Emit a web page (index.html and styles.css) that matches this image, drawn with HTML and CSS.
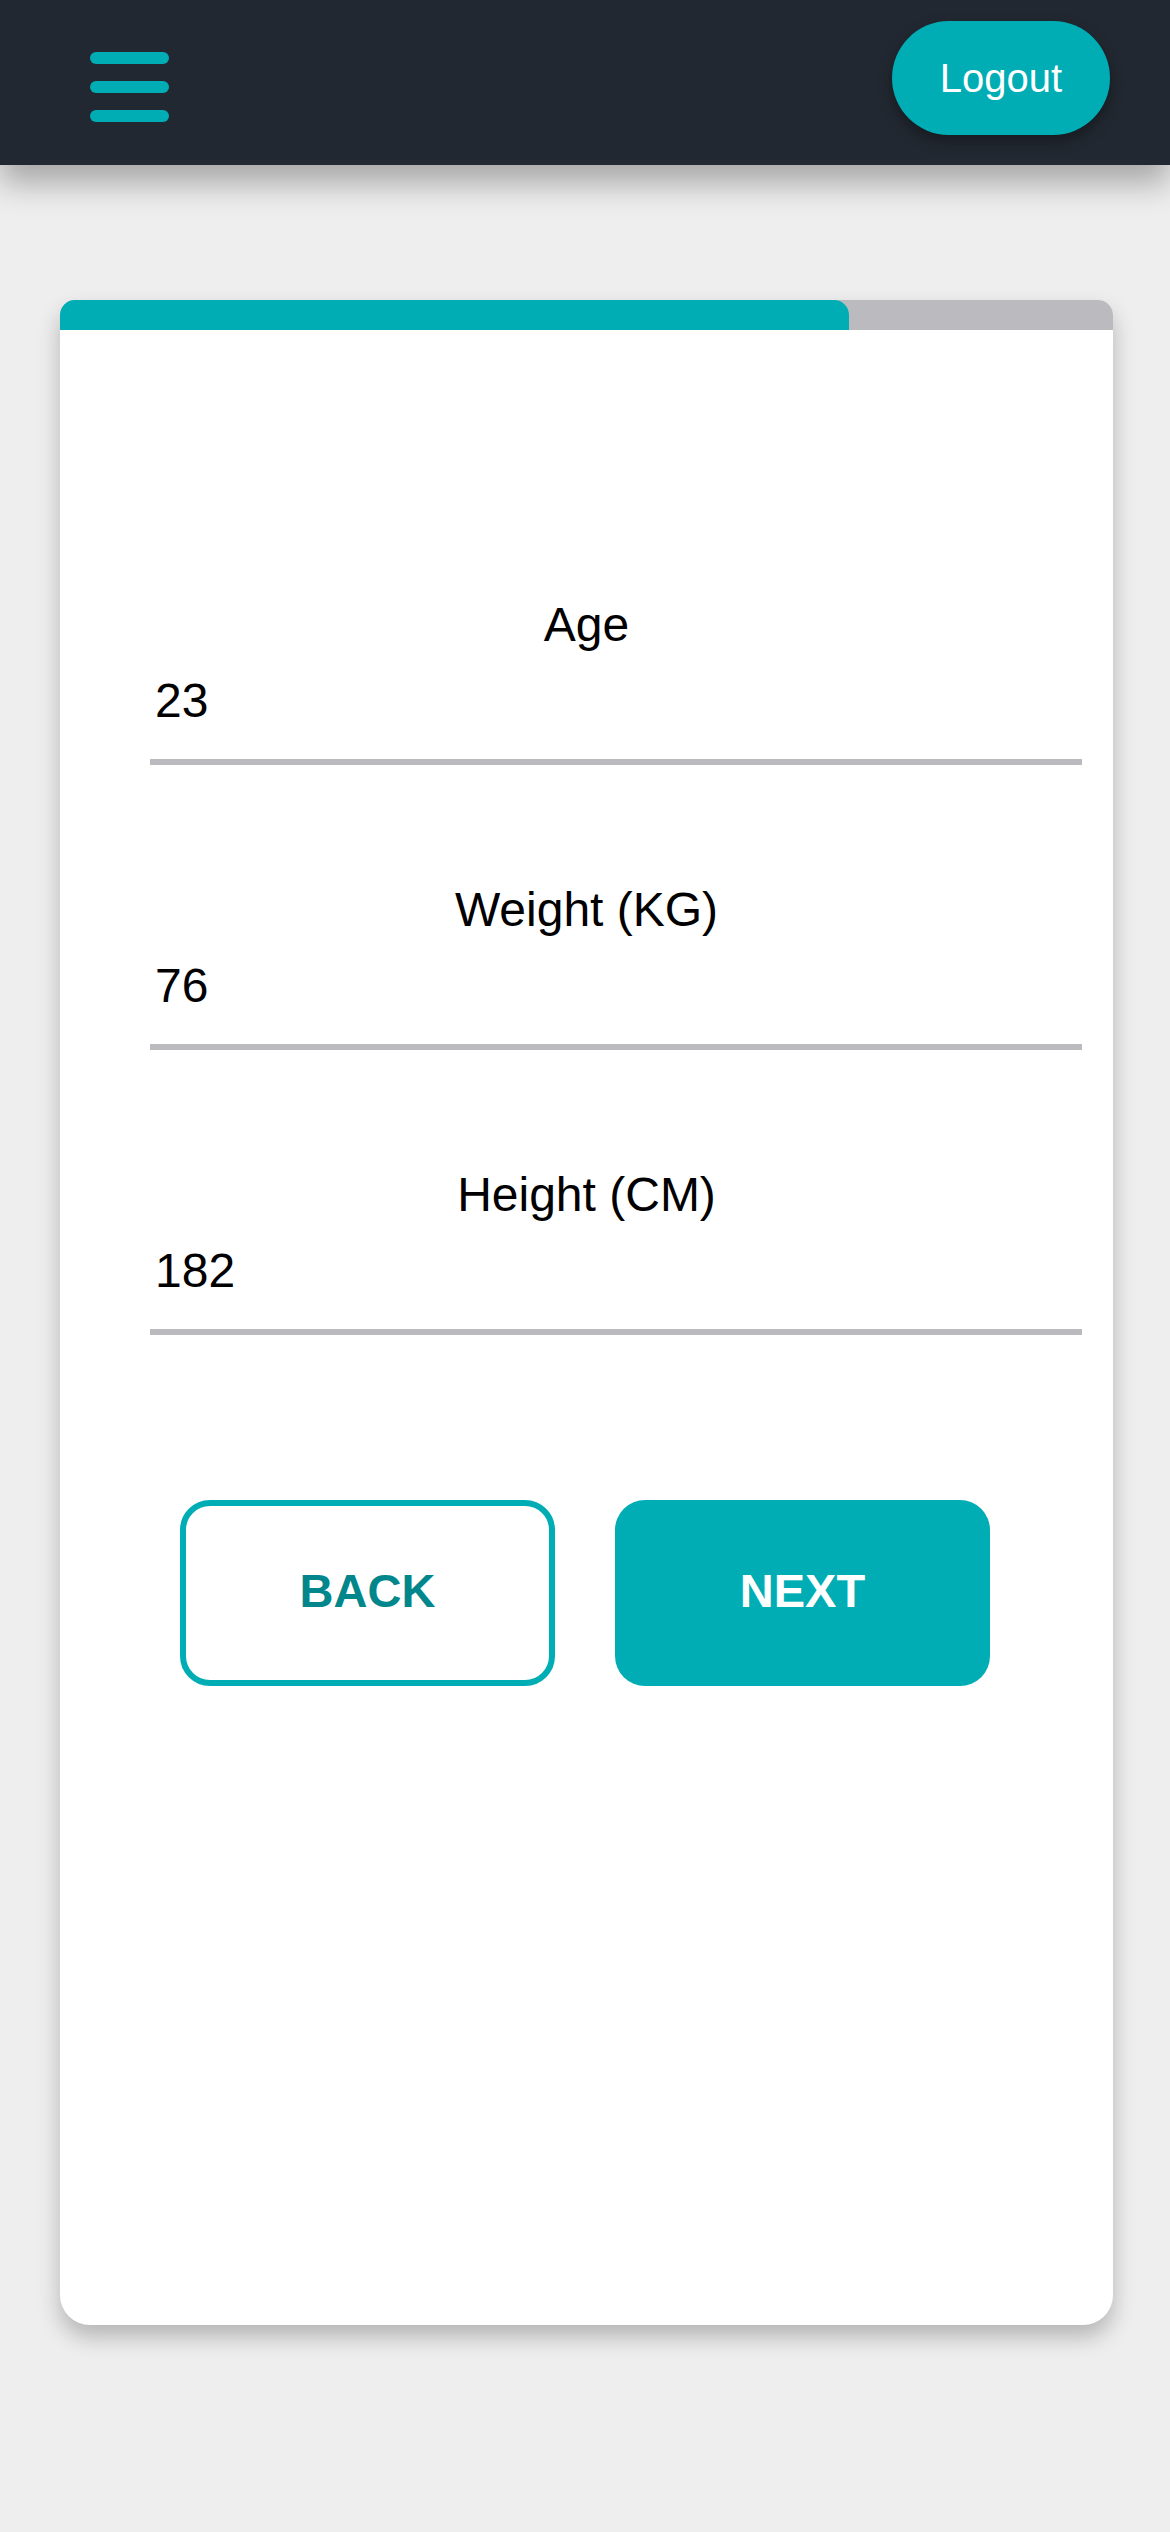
FILE: index.html
```html
<!DOCTYPE html>
<html lang="en">
<head>
<meta charset="utf-8">
<title>Profile</title>
<link rel="stylesheet" href="styles.css">
</head>
<body>
<header class="topbar">
  <button class="menu" aria-label="Menu">
    <span class="bar"></span>
    <span class="bar"></span>
    <span class="bar"></span>
  </button>
  <button class="logout">Logout</button>
</header>
<main class="page">
  <section class="card">
    <div class="progress"><div class="progress-fill" style="width:74.9%"></div></div>
    <form class="form">
      <div class="field">
        <label class="label" for="age">Age</label>
        <input class="input" id="age" type="text" value="23">
      </div>
      <div class="field">
        <label class="label" for="weight">Weight (KG)</label>
        <input class="input" id="weight" type="text" value="76">
      </div>
      <div class="field">
        <label class="label" for="height">Height (CM)</label>
        <input class="input" id="height" type="text" value="182">
      </div>
      <div class="actions">
        <button type="button" class="btn btn-back">BACK</button>
        <button type="button" class="btn btn-next">NEXT</button>
      </div>
    </form>
  </section>
</main>
</body>
</html>
```

FILE: styles.css
```css
* { box-sizing: border-box; }

html, body {
  margin: 0;
  padding: 0;
}

body {
  background: #eeeeee;
  font-family: "Liberation Sans", Arial, sans-serif;
  color: #000;
}

.topbar {
  height: 165px;
  background: #222831;
  display: flex;
  justify-content: space-between;
  align-items: flex-start;
  padding: 0 60px 0 90px;
  box-shadow: 0 18px 30px rgba(0, 0, 0, 0.3);
  position: relative;
  z-index: 1;
}

.menu {
  margin-top: 52px;
  padding: 0;
  border: 0;
  background: none;
  display: flex;
  flex-direction: column;
  gap: 17px;
  width: 79px;
}

.bar {
  display: block;
  width: 79px;
  height: 12px;
  border-radius: 6px;
  background: #00adb5;
}

.logout {
  margin-top: 21px;
  width: 218px;
  height: 114px;
  border: 0;
  border-radius: 57px;
  background: #00adb5;
  color: #ffffff;
  font-family: "Liberation Sans", Arial, sans-serif;
  font-size: 40px;
  padding: 0;
  box-shadow: 0 6px 14px rgba(0, 0, 0, 0.35);
}

.page {
  padding: 135px 57px 120px 60px;
}

.card {
  background: #ffffff;
  height: 2025px;
  border-radius: 15px 15px 30px 30px;
  overflow: hidden;
  box-shadow: 0 12px 22px rgba(0, 0, 0, 0.24);
}

.progress {
  height: 30px;
  background: #bbbabe;
}

.progress-fill {
  height: 100%;
  background: #00adb5;
  border-top-right-radius: 15px;
}

.form {
  padding-top: 267px;
}

.field {
  margin-bottom: 117px;
}

.label {
  display: block;
  text-align: center;
  font-size: 48px;
  line-height: 56px;
}

.input {
  display: block;
  margin: 0 31px 0 90px;
  width: calc(100% - 121px);
  box-sizing: border-box;
  height: 112px;
  padding: 19px 5px 31px;
  border: 0;
  border-bottom: 6px solid #bbbabe;
  background: transparent;
  font-family: "Liberation Sans", Arial, sans-serif;
  font-size: 48px;
  line-height: 56px;
  color: #000;
  outline: none;
}

.actions {
  display: flex;
  justify-content: center;
  gap: 60px;
  margin-top: 165px;
  margin-left: -3px;
}

.btn {
  width: 375px;
  height: 186px;
  border-radius: 30px;
  font-family: "Liberation Sans", Arial, sans-serif;
  font-size: 47px;
  font-weight: bold;
  padding: 0 0 6px;
}

.btn-back {
  background: #ffffff;
  border: 6px solid #00adb5;
  color: #00868b;
}

.btn-next {
  background: #00adb5;
  border: 0;
  color: #ffffff;
}
```
